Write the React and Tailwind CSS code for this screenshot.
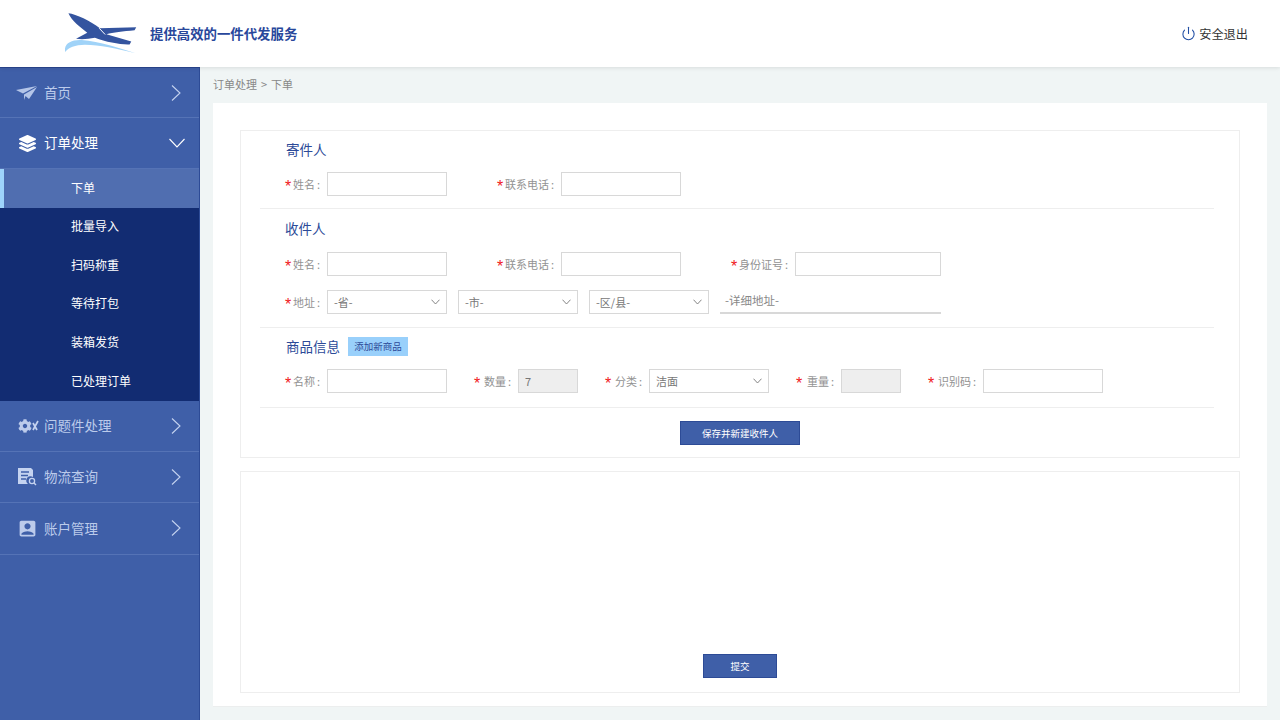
import React from 'react';
import { Power } from 'lucide-react';
import { FaCog, FaLayerGroup } from 'react-icons/fa';
import { MdAccountBox } from 'react-icons/md';

const Logo = () => (
  <svg width="73" height="43" viewBox="195 35 220 130" className="shrink-0">
    <path d="M205 39C228 41 272 63 300 84L410 81L405 90C370 93 340 97 320 102L395 124L390 133C360 134 320 126 285 113C265 117 245 119 228 116L262 98C240 80 215 62 205 39Z" fill="#34549f" />
    <path d="M298 84L316 103" stroke="#fff" strokeWidth="3" fill="none" />
    <path d="M195 156C190 130 215 118 245 120C300 124 360 145 408 160C350 145 300 134 255 134C225 134 205 143 195 156Z" fill="#a0d3f8" />
  </svg>
);

const PlaneIcon = () => (
  <svg width="22" height="14" viewBox="0 0 22 14" fill="#b4c5e8">
    <path d="M0 4L21 0L7 7.5ZM8 8.5L21 1L13 13L9.5 10L8 14Z" />
  </svg>
);

const DocSearchIcon = () => (
  <svg width="19" height="18" viewBox="0 0 19 18">
    <path d="M0 0H13L15 2V9A4 4 0 0 0 10 16H0Z" fill="#c5d3f0" />
    <path d="M3 4H11M3 7.5H10M3 11H8" stroke="#3f5fa8" strokeWidth="1.4" />
    <circle cx="14" cy="13" r="2.6" fill="none" stroke="#c5d3f0" strokeWidth="1.3" />
    <path d="M16 15L18 17" stroke="#c5d3f0" strokeWidth="1.4" />
  </svg>
);

// gear plus crossed tools
const GearsIcon = () => (
  <span className="flex items-center">
    <FaCog size={14} />
    <svg width="7" height="11" viewBox="0 0 7 11" fill="none" stroke="#c5d3f0" strokeWidth="1.7" className="ml-[0px]">
      <path d="M6 1L1 10M1 3L5 10" />
    </svg>
  </span>
);

const ChevronRight = () => (
  <svg width="10" height="16" viewBox="0 0 10 16" fill="none" stroke="#c5d3f0" strokeWidth="1.1">
    <path d="M1 0.5L9 8L1 15.5" />
  </svg>
);

const ChevronDown = ({ className = '' }) => (
  <svg width="16" height="10" viewBox="0 0 16 10" fill="none" stroke="currentColor" strokeWidth="1.1" className={className}>
    <path d="M0.5 1L8 9L15.5 1" />
  </svg>
);

const SmallChevron = () => (
  <svg width="9" height="6" viewBox="0 0 9 6" fill="none" stroke="#777" strokeWidth="0.9">
    <path d="M0.5 0.7L4.5 5L8.5 0.7" />
  </svg>
);

const NavRow = ({ icon, label, height, active }) => (
  <div className={`flex items-center justify-between pl-[16px] pr-[14px] border-b border-[#5573b6] ${height} ${active ? 'text-white' : 'text-[#bccbeb]'}`}>
    <div className="flex items-center">
      <span className="flex w-[28px] items-center">{icon}</span>
      <span className="pb-[1px] text-[13.5px]">{label}</span>
    </div>
    {active ? <ChevronDown className="text-white" /> : <span className="mr-[4px]"><ChevronRight /></span>}
  </div>
);

const subItems = ['批量导入', '扫码称重', '等待打包', '装箱发货', '已处理订单'];

const Sidebar = () => (
  <aside className="w-[200px] shrink-0 bg-[#3f5fa8] border-r border-[#2d4b96] border-t border-t-[#2a4690]">
    <NavRow icon={<PlaneIcon />} label="首页" height="h-[50px]" />
    <NavRow icon={<FaLayerGroup size={17} className="ml-[3px]" />} label="订单处理" height="h-[51px]" active />
    <div className="flex h-[39px] items-center border-l-[4px] border-[#9ed4fb] bg-[#506eb0] pb-[2px] pl-[67px] text-[12px] text-white">下单</div>
    <div className="bg-[#122c72]">
      {subItems.map(item => (
        <div key={item} className="flex h-[38.6px] items-center pb-[2px] pl-[71px] text-[12px] text-white">{item}</div>
      ))}
    </div>
    <NavRow icon={<span className="ml-[2px]"><GearsIcon /></span>} label="问题件处理" height="h-[51px]" />
    <NavRow icon={<span className="ml-[2px]"><DocSearchIcon /></span>} label="物流查询" height="h-[51px]" />
    <NavRow icon={<MdAccountBox size={21} className="ml-[1px]" />} label="账户管理" height="h-[52px]" />
  </aside>
);

const Label = ({ text, width }) => (
  <label className={`flex shrink-0 items-center justify-end whitespace-nowrap pr-[1px] text-[11px] text-[#929292] ${width}`}>
    <span className="mr-auto translate-y-[3px] font-['Liberation_Sans'] text-[16px] leading-none text-[#f02020]">*</span>
    {text}
    <span className="ml-[2px]">:</span>
  </label>
);

const inputClass = 'h-[24px] border border-[#d8d8d8] px-[6px] text-[11px] text-[#777] outline-none';

const Field = ({ label, labelWidth, inputWidth, gap = '', disabled, value }) => (
  <div className={`flex shrink-0 items-center ${gap}`}>
    <Label text={label} width={labelWidth} />
    <input
      readOnly
      value={value || ''}
      className={`ml-[6px] ${inputClass} ${inputWidth} ${disabled ? 'bg-[#eeeeee]' : 'bg-white'}`}
    />
  </div>
);

const Select = ({ value, width = 'w-[120px]', className = '' }) => (
  <div className={`flex h-[24px] shrink-0 items-center justify-between border border-[#d8d8d8] bg-white pl-[6px] pr-[6px] text-[11px] text-[#777] ${width} ${className}`}>
    <span>{value}</span>
    <SmallChevron />
  </div>
);

const SectionTitle = ({ children }) => (
  <h3 className="-translate-y-[1px] h-[14px] whitespace-nowrap text-[13.5px] font-normal leading-[14px] text-[#2c4a98]">{children}</h3>
);

const Divider = () => <div className="ml-[19px] h-[1px] w-[954px] bg-[#eeeeee]" />;

const Form = () => (
  <section className="border border-[#eeeeee]">
    {/* 寄件人 */}
    <div className="h-[77px] pl-[44px]">
      <div className="pl-[1px] pt-[12px]"><SectionTitle>寄件人</SectionTitle></div>
      <div className="mt-[15px] flex items-center">
        <Field label="姓名" labelWidth="w-[36px]" inputWidth="w-[120px]" />
        <Field label="联系电话" labelWidth="w-[58px]" inputWidth="w-[120px]" gap="ml-[50px]" />
      </div>
    </div>
    <Divider />

    {/* 收件人 */}
    <div className="h-[118px] pl-[44px]">
      <div className="pt-[13px]"><SectionTitle>收件人</SectionTitle></div>
      <div className="mt-[16px] flex items-center">
        <Field label="姓名" labelWidth="w-[36px]" inputWidth="w-[120px]" />
        <Field label="联系电话" labelWidth="w-[58px]" inputWidth="w-[120px]" gap="ml-[50px]" />
        <Field label="身份证号" labelWidth="w-[58px]" inputWidth="w-[146px]" gap="ml-[50px]" />
      </div>
      <div className="mt-[14px] flex items-center">
        <Label text="地址" width="w-[36px]" />
        <Select value="-省-" className="ml-[6px]" />
        <Select value="-市-" className="ml-[11px]" />
        <Select value="-区/县-" className="ml-[11px]" />
        <div className="ml-[11px] flex h-[24px] w-[221px] items-center border-b-2 border-[#d8d8d8] pl-[5px] text-[11.5px] text-[#888]">-详细地址-</div>
      </div>
    </div>
    <Divider />

    {/* 商品信息 */}
    <div className="h-[79px] pl-[44px]">
      <div className="flex items-center pl-[1px] pt-[9px]">
        <SectionTitle>商品信息</SectionTitle>
        <button className="ml-[8px] h-[19px] w-[60px] bg-[#99d0fb] text-[9.5px] text-[#2c4a98]">添加新商品</button>
      </div>
      <div className="mt-[13px] flex items-center">
        <Field label="名称" labelWidth="w-[36px]" inputWidth="w-[120px]" />
        <Field label="数量" labelWidth="w-[38px]" inputWidth="w-[60px]" gap="ml-[27px]" disabled value="7" />
        <div className="ml-[27px] flex shrink-0 items-center">
          <Label text="分类" width="w-[38px]" />
          <Select value="洁面" className="ml-[6px]" />
        </div>
        <Field label="重量" labelWidth="w-[39px]" inputWidth="w-[60px]" gap="ml-[27px]" disabled />
        <Field label="识别码" labelWidth="w-[49px]" inputWidth="w-[120px]" gap="ml-[27px]" />
      </div>
    </div>
    <Divider />

    <div className="flex h-[49px] justify-center pt-[13px]">
      <button className="h-[24px] w-[120px] border border-[#2d4b96] bg-[#3f5fa8] text-[9.5px] text-white">保存并新建收件人</button>
    </div>
  </section>
);

const App = () => (
  <div className="flex h-[720px] w-[1280px] flex-col overflow-hidden bg-[#f0f5f5] font-['Noto_Sans_CJK_SC','Liberation_Sans',sans-serif]">
    <header className="relative z-10 flex h-[67px] shrink-0 items-center justify-between bg-white pl-[65px] pr-[32px] shadow-[0_1px_4px_rgba(0,0,0,0.1)]">
      <div className="flex items-center">
        <Logo />
        <span className="ml-[12px] text-[13.4px] font-bold text-[#28479b]">提供高效的一件代发服务</span>
      </div>
      <div className="flex items-center pt-[2px] text-[12.2px] text-[#333]">
        <Power size={15} strokeWidth={1.7} className="mr-[3px] -mt-[2px] text-[#1f4da3]" />
        安全退出
      </div>
    </header>

    <div className="flex min-h-0 flex-1">
      <Sidebar />
      <main className="min-w-0 flex-1 px-[13px]">
        <div className="flex h-[36px] items-center gap-[4px] pb-[2px] text-[11px] text-[#888]">
          <span>订单处理</span>
          <span>&gt;</span>
          <span>下单</span>
        </div>
        <div className="h-[604px] border-b border-[#eceeee] bg-white p-[27px] pb-0">
          <Form />
          <section className="mt-[13px] flex h-[222px] items-end justify-center border border-[#eeeeee] pb-[14px]">
            <button className="h-[24px] w-[74px] border border-[#2d4b96] bg-[#3f5fa8] text-[9.5px] text-white">提交</button>
          </section>
        </div>
      </main>
    </div>
  </div>
);

export default App;
